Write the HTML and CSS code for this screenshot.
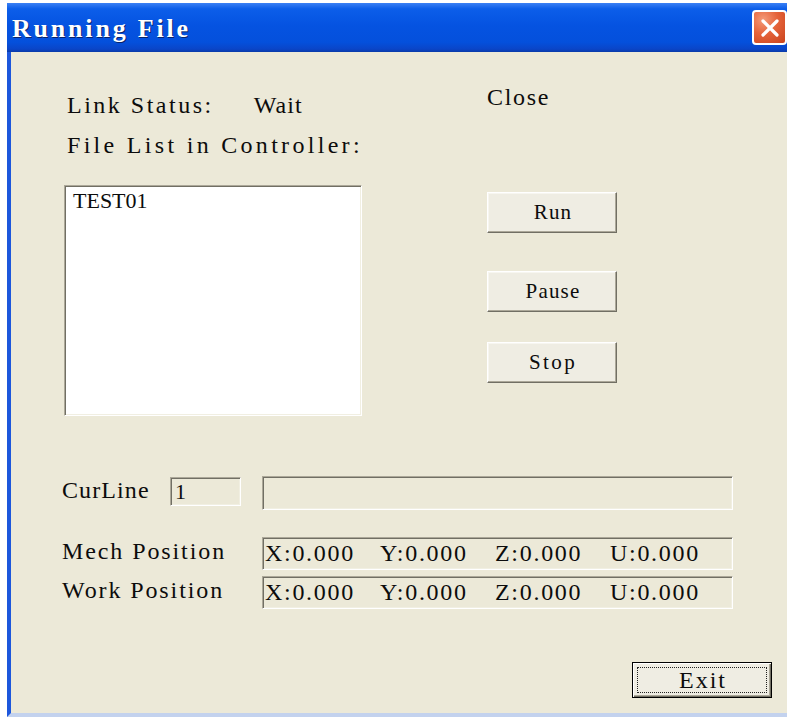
FILE: index.html
```html
<!DOCTYPE html>
<html lang="en">
<head>
<meta charset="utf-8">
<title>Running File</title>
<link rel="stylesheet" href="styles.css">
</head>
<body>
<div class="window">
  <div class="titlebar">
    <span class="title">Running File</span>
    <span class="close-btn">
      <svg width="22" height="22" viewBox="0 0 22 22"><path d="M4 4 L18 18 M18 4 L4 18" stroke="#fff" stroke-width="3.2" stroke-linecap="round"/></svg>
    </span>
  </div>
  <div class="client">
    <div class="top">
      <div class="left-col">
        <div class="label-line link-line">Link Status:<span class="status-value">Wait</span></div>
        <div class="label-line gap-line files-line">File List in Controller:</div>
        <div class="listbox sunken">
          <div class="list-item">TEST01</div>
        </div>
      </div>
      <div class="right-col">
        <div class="label-line close-line">Close</div>
        <button class="btn btn-run">Run</button>
        <button class="btn btn-pause">Pause</button>
        <button class="btn btn-stop">Stop</button>
      </div>
    </div>

    <div class="row row-curline">
      <span class="row-label short">CurLine</span>
      <span class="field field-line sunken">1</span>
      <span class="field field-progress sunken"></span>
    </div>
    <div class="row row-mech">
      <span class="row-label">Mech Position</span>
      <span class="field field-pos sunken"><span class="axis">X:0.000</span><span class="axis">Y:0.000</span><span class="axis">Z:0.000</span><span class="axis">U:0.000</span></span>
    </div>
    <div class="row row-work">
      <span class="row-label">Work Position</span>
      <span class="field field-pos sunken"><span class="axis">X:0.000</span><span class="axis">Y:0.000</span><span class="axis">Z:0.000</span><span class="axis">U:0.000</span></span>
    </div>

    <div class="footer">
      <button class="btn-exit"><span class="focus-ring">Exit</span></button>
    </div>
  </div>
</div>
</body>
</html>
```

FILE: styles.css
```css
html, body {
  margin: 0;
  padding: 0;
  background: #ffffff;
}

body {
  font-family: "Liberation Serif", "Times New Roman", serif;
  color: #0c0c0c;
}

.window {
  margin: 3px 0 0 7px;
  width: 780px;
}

/* XP style caption bar */
.titlebar {
  height: 49px;
  box-sizing: border-box;
  display: flex;
  align-items: center;
  justify-content: space-between;
  padding-left: 5px;
  background: linear-gradient(180deg, #3b80f4 0%, #0c5ee9 12%, #0553e1 45%, #0450dc 80%, #0a45c8 94%, #0a3aa8 100%);
}

.title {
  color: #fff;
  font-weight: bold;
  font-size: 26px;
  letter-spacing: 2.8px;
  padding-top: 2px;
  text-shadow: 1px 1px 0 #0a246a;
}

.close-btn {
  width: 35px;
  height: 35px;
  box-sizing: border-box;
  border: 2px solid #fff;
  border-radius: 4px;
  display: flex;
  align-items: center;
  justify-content: center;
  background: radial-gradient(circle at 30% 25%, #f49a78 0%, #e5633a 45%, #c9431c 100%);
}

/* dialog client area */
.client {
  height: 661px;
  background: #ece9d8;
  border-left: 4px solid #1d57dc;
  border-bottom: 4px solid #c3d2ee;
  font-size: 24px;
}

.top {
  display: flex;
  align-items: flex-start;
}

.left-col {
  margin-left: 53px;
  padding-top: 41px;
  width: 298px;
}

.label-line {
  line-height: 24px;
  height: 24px;
  padding-left: 3px;
  white-space: pre;
}

.link-line { letter-spacing: 2.5px; }
.files-line { letter-spacing: 3.3px; }
.close-line { letter-spacing: 1.7px; }

.gap-line {
  margin-top: 16px;
}

.status-value {
  margin-left: 40px;
  letter-spacing: 1.1px;
}

.sunken {
  box-sizing: border-box;
  border-top: 1px solid #aca899;
  border-left: 1px solid #aca899;
  border-right: 1px solid #ffffff;
  border-bottom: 1px solid #ffffff;
  box-shadow: inset 1px 1px 0 #716f64, inset -1px -1px 0 #f1efe2;
}

.listbox {
  margin-top: 28px;
  height: 231px;
  background: #ffffff;
  padding: 3px 0 0 8px;
}

.list-item {
  font-size: 22px;
  line-height: 24px;
}

.right-col {
  margin-left: 125px;
  padding-top: 33px;
  display: flex;
  flex-direction: column;
}

.right-col .label-line {
  padding-left: 0;
}

.btn {
  width: 130px;
  height: 41px;
  box-sizing: border-box;
  font-family: inherit;
  font-size: 21px;
  letter-spacing: 1.2px;
  color: #0c0c0c;
  background: #efede3;
  border-top: 1px solid #ffffff;
  border-left: 1px solid #ffffff;
  border-right: 1px solid #716f64;
  border-bottom: 1px solid #716f64;
  box-shadow: inset -1px -1px 0 #aca899, inset 1px 1px 0 #f7f6f0;
  padding: 0 0 0 2px;
}

.btn-run { margin-top: 83px; }
.btn-pause { margin-top: 38px; }
.btn-stop { margin-top: 30px; letter-spacing: 2.4px; }

/* status rows */
.row {
  display: flex;
  align-items: flex-start;
  margin-left: 51px;
}

.row-label {
  width: 200px;
  line-height: 28px;
  white-space: pre;
  letter-spacing: 1.9px;
}

.row-label.short {
  width: 108px;
  letter-spacing: 1.1px;
}

.row-curline { margin-top: 60px; }
.row-mech { margin-top: 27px; }
.row-work { margin-top: 6px; }

.field {
  display: block;
  white-space: pre;
}

.field-line {
  width: 71px;
  height: 29px;
  margin-top: 1px;
  padding-left: 4px;
  line-height: 28px;
  font-size: 22px;
}

.field-progress {
  width: 471px;
  height: 34px;
  margin-left: 21px;
}

.field-pos {
  display: flex;
  width: 471px;
  height: 33px;
  padding-left: 2px;
  line-height: 30px;
  font-size: 24px;
}

.axis {
  width: 115px;
  flex: none;
  letter-spacing: 1.7px;
}

.footer {
  display: flex;
  justify-content: flex-end;
  margin-top: 53px;
  margin-right: 15px;
}

.btn-exit {
  width: 140px;
  height: 36px;
  box-sizing: border-box;
  padding: 4px;
  background: #efede3;
  border: 1px solid #000;
  box-shadow: inset 1px 1px 0 #ffffff, inset -1px -1px 0 #716f64, inset -2px -2px 0 #aca899;
  font-family: inherit;
  font-size: 24px;
  letter-spacing: 2px;
  color: #0c0c0c;
}

.focus-ring {
  display: block;
  height: 100%;
  box-sizing: border-box;
  border: 1px dotted #222;
  line-height: 24px;
  padding-left: 2px;
}
```
